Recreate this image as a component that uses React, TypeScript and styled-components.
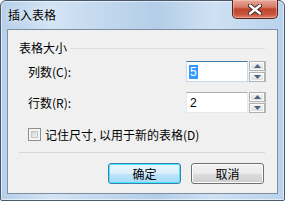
import styled, { createGlobalStyle } from "styled-components";

const GlobalStyle = createGlobalStyle`
  html, body {
    margin: 0;
    padding: 0;
    background: #ffffff;
  }
  body {
    font-family: "Noto Sans CJK SC", "Liberation Sans", sans-serif;
    font-size: 12px;
    color: #000;
  }
`;

const Window = styled.div`
  box-sizing: border-box;
  width: 285px;
  height: 201px;
  border: 1px solid #49596b;
  border-radius: 6px 6px 2px 2px;
  background: linear-gradient(
    90deg,
    #b6cfe9 0%,
    #d3e4f5 18%,
    #c4d9ee 35%,
    #b4cde8 55%,
    #cfe1f3 75%,
    #b9d2eb 100%
  );
  box-shadow: inset 0 0 0 1px rgba(255, 255, 255, 0.55);
  display: flex;
  flex-direction: column;
`;

const TitleBar = styled.div`
  height: 28px;
  display: flex;
  align-items: flex-start;
  justify-content: space-between;
  padding-left: 7px;
  padding-right: 6px;
`;

const Title = styled.div`
  margin-top: 7px;
  font-size: 12px;
  line-height: 14px;
  color: #000;
  text-shadow: 0 0 6px rgba(255, 255, 255, 0.9);
`;

const CloseButton = styled.div`
  box-sizing: border-box;
  width: 46px;
  height: 19px;
  margin-top: -1px;
  border: 1px solid #5a2019;
  border-top: none;
  border-radius: 0 0 5px 5px;
  background: linear-gradient(
    180deg,
    #e9a99b 0%,
    #d67a67 40%,
    #c0442d 50%,
    #c9543c 80%,
    #d9846f 100%
  );
  box-shadow: inset 0 0 0 1px rgba(255, 210, 200, 0.45);
  display: flex;
  align-items: center;
  justify-content: center;
`;

const Client = styled.div`
  flex: 1;
  margin: 0 6px 6px 6px;
  border: 1px solid #7d8ea2;
  background: #f0f0f0;
  padding: 11px 11px 0 11px;
  display: flex;
  flex-direction: column;
`;

const GroupHeading = styled.div`
  display: flex;
  align-items: center;
  height: 14px;
  line-height: 14px;
  gap: 3px;
`;

const GroupLine = styled.div`
  flex: 1;
  height: 1px;
  background: #d5dfe5;
  margin-right: 1px;
`;

const FieldRow = styled.div<{ $top: number }>`
  display: flex;
  align-items: center;
  height: 21px;
  margin-top: ${(p) => p.$top}px;
  padding-left: 9px;
`;

const FieldLabel = styled.div`
  flex: 1;
  line-height: 14px;
`;

const Spin = styled.div`
  display: flex;
  height: 21px;
  width: 80px;
`;

const SpinText = styled.div<{ $focused?: boolean }>`
  box-sizing: border-box;
  width: 63px;
  height: 21px;
  background: #fff;
  border: 1px solid ${(p) => (p.$focused ? "#c5daed" : "#e3e9ef")};
  border-top-color: ${(p) => (p.$focused ? "#3d7bad" : "#abadb3")};
  display: flex;
  align-items: center;
  padding-left: 2px;
  font-family: "Liberation Sans", sans-serif;
  font-size: 12px;
`;

const Selected = styled.span`
  background: #3399ff;
  color: #fff;
  padding: 0 1px;
  line-height: 14px;
`;

const Plain = styled.span`
  padding: 0 1px;
  line-height: 14px;
`;

const SpinButtons = styled.div`
  box-sizing: border-box;
  width: 17px;
  height: 21px;
  display: flex;
  flex-direction: column;
  gap: 1px;
  border-right: 1px solid #b7b7b7;
  margin-left: 1px;
`;

const SpinButton = styled.div`
  box-sizing: border-box;
  height: 10px;
  border: 1px solid #b1b1b1;
  background: linear-gradient(180deg, #f6f6f6 0%, #e7e7e7 50%, #dcdcdc 100%);
  box-shadow: inset 0 0 0 1px #fcfcfc;
  display: flex;
  align-items: center;
  justify-content: center;
`;

const CheckRow = styled.div`
  display: flex;
  align-items: center;
  margin-top: 15px;
  padding-left: 9px;
  gap: 4px;
  height: 13px;
`;

const CheckBox = styled.div`
  box-sizing: border-box;
  width: 13px;
  height: 13px;
  border: 1px solid #8e8f8f;
  background: #f4f4f4;
  padding: 2px;
  & > div {
    box-sizing: border-box;
    width: 100%;
    height: 100%;
    border: 1px solid #c2c5ca;
    background: linear-gradient(135deg, #d4d7db 0%, #f1f2f4 100%);
  }
`;

const Separator = styled.div`
  height: 1px;
  background: #d7d7d7;
  margin-top: 11px;
  margin-right: 1px;
`;

const ButtonRow = styled.div`
  display: flex;
  justify-content: flex-end;
  gap: 10px;
  margin-top: 10px;
  margin-right: 2px;
`;

const Button = styled.div<{ $default?: boolean }>`
  box-sizing: border-box;
  width: 73px;
  height: 21px;
  border: 1px solid ${(p) => (p.$default ? "#3c7fb1" : "#707070")};
  border-radius: 3px;
  background: ${(p) =>
    p.$default
      ? "linear-gradient(180deg, #eaf6fd 0%, #d9f0fc 50%, #bee6fd 51%, #a7d9f5 100%)"
      : "linear-gradient(180deg, #f2f2f2 0%, #ebebeb 50%, #dddddd 51%, #cfcfcf 100%)"};
  box-shadow: inset 0 0 0 1px
    ${(p) => (p.$default ? "#48e7f8" : "#fcfcfc")};
  display: flex;
  align-items: center;
  justify-content: center;
  line-height: 14px;
`;

function Arrow({ up }: { up?: boolean }) {
  return (
    <svg width="7" height="4" viewBox="0 0 7 4">
      <path d={up ? "M0 4 L3.5 0 L7 4 Z" : "M0 0 L3.5 4 L7 0 Z"} fill="#4d6185" />
    </svg>
  );
}

function SpinBox({ value, focused }: { value: string; focused?: boolean }) {
  return (
    <Spin>
      <SpinText $focused={focused}>
        {focused ? <Selected>{value}</Selected> : <Plain>{value}</Plain>}
      </SpinText>
      <SpinButtons>
        <SpinButton>
          <Arrow up />
        </SpinButton>
        <SpinButton>
          <Arrow />
        </SpinButton>
      </SpinButtons>
    </Spin>
  );
}

export default function App() {
  return (
    <>
      <GlobalStyle />
      <Window>
        <TitleBar>
          <Title>插入表格</Title>
          <CloseButton>
            <svg width="14" height="11" viewBox="0 0 14 11">
              <path
                d="M2 1.5 L12 9.5 M12 1.5 L2 9.5"
                stroke="#3b2522"
                strokeWidth="4.2"
                strokeLinecap="round"
              />
              <path
                d="M2 1.5 L12 9.5 M12 1.5 L2 9.5"
                stroke="#ffffff"
                strokeWidth="2.4"
                strokeLinecap="round"
              />
            </svg>
          </CloseButton>
        </TitleBar>
        <Client>
          <GroupHeading>
            <span>表格大小</span>
            <GroupLine />
          </GroupHeading>
          <FieldRow $top={6}>
            <FieldLabel>列数(C):</FieldLabel>
            <SpinBox value="5" focused />
          </FieldRow>
          <FieldRow $top={10}>
            <FieldLabel>行数(R):</FieldLabel>
            <SpinBox value="2" />
          </FieldRow>
          <CheckRow>
            <CheckBox>
              <div />
            </CheckBox>
            <span>记住尺寸, 以用于新的表格(D)</span>
          </CheckRow>
          <Separator />
          <ButtonRow>
            <Button $default>确定</Button>
            <Button>取消</Button>
          </ButtonRow>
        </Client>
      </Window>
    </>
  );
}
